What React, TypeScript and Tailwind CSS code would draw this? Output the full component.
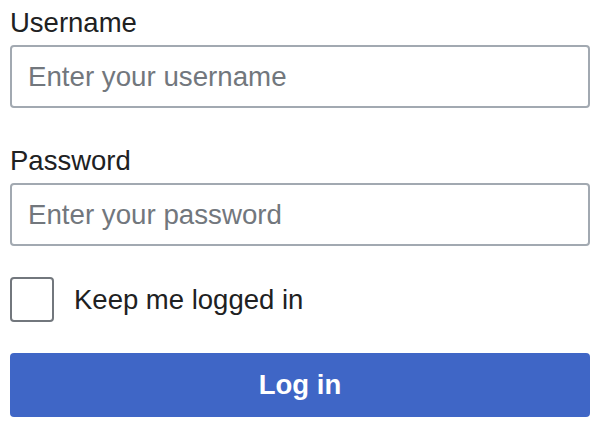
export default function App() {
  return (
    <div
      className="w-[606px] h-[430px] bg-white pt-[2px] pl-[10px] text-[#202122]"
      style={{ fontFamily: '"Liberation Sans", Arial, sans-serif' }}
    >
      <form className="w-[580px] flex flex-col" onSubmit={(e) => e.preventDefault()}>
        <div className="flex flex-col">
          <label htmlFor="username" className="text-[27.5px] leading-[42px]">
            Username
          </label>
          <input
            id="username"
            type="text"
            placeholder="Enter your username"
            className="mt-[1px] h-[63px] w-full rounded-[4px] border-2 border-[#a2a9b1] bg-white pl-[16px] text-[27.7px] placeholder:text-[#72777d] outline-none"
          />
        </div>

        <div className="mt-[32px] flex flex-col">
          <label htmlFor="password" className="text-[27.5px] leading-[42px]">
            Password
          </label>
          <input
            id="password"
            type="password"
            placeholder="Enter your password"
            className="mt-[1px] h-[63px] w-full rounded-[4px] border-2 border-[#a2a9b1] bg-white pl-[16px] text-[27.7px] placeholder:text-[#72777d] outline-none"
          />
        </div>

        <label className="mt-[31px] flex items-center gap-[20px]">
          <input
            type="checkbox"
            className="appearance-none m-0 w-[44px] h-[45px] rounded-[4px] border-2 border-[#72777d] bg-white"
          />
          <span className="text-[27.5px] leading-[42px]">Keep me logged in</span>
        </label>

        <button
          type="submit"
          className="mt-[31px] h-[64px] w-full rounded-[4px] bg-[#3f66c6] text-[27.5px] font-bold text-white"
        >
          Log in
        </button>
      </form>
    </div>
  );
}
